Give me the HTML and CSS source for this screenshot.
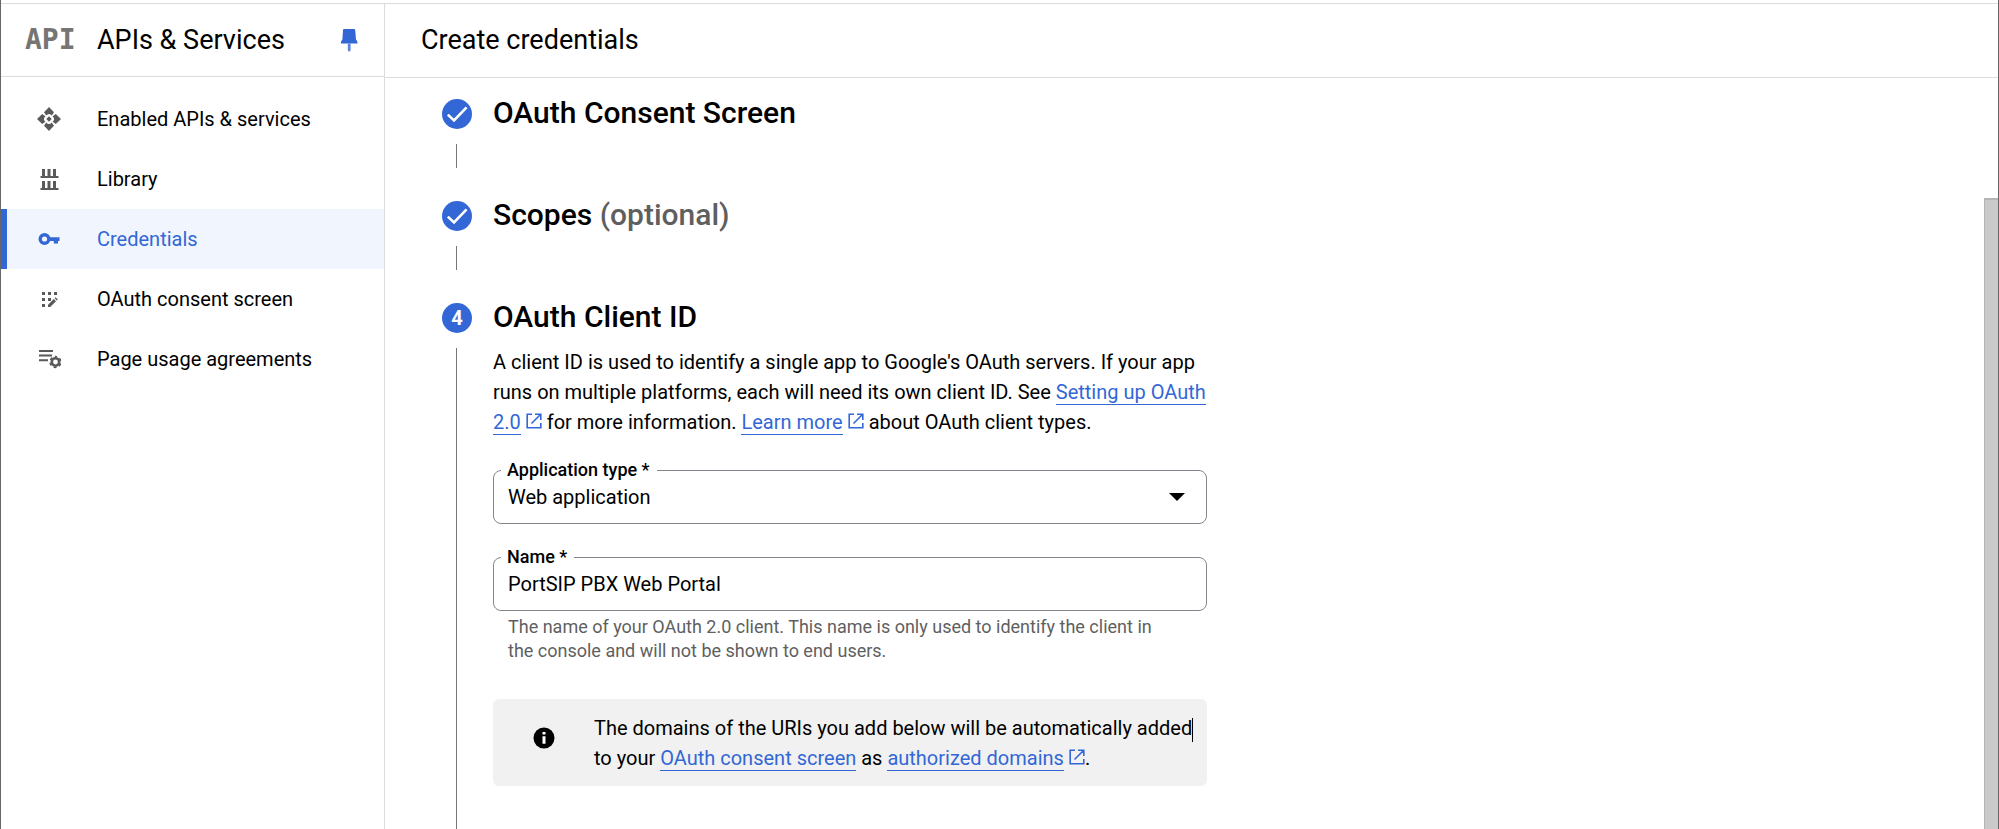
FILE: index.html
```html
<!DOCTYPE html>
<html lang="en">
<head>
<meta charset="utf-8">
<title>Create credentials – APIs &amp; Services</title>
<link rel="stylesheet" href="styles.css">
</head>
<body>
<svg class="defs" aria-hidden="true">
  <symbol id="open" viewBox="0 0 16 16"><path d="M6 1.2H1.2v13.6h13.6V10M9 1.2h5.8V7M14.2 1.8L5.5 10.5" fill="none" stroke="currentColor" stroke-width="1.6"/></symbol>
  <symbol id="check" viewBox="0 0 30 30"><circle cx="15" cy="15" r="15" fill="#3367d6"/><path d="M5.8 15.6L12 21.4L24.6 8.4" fill="none" stroke="#fff" stroke-width="2.6"/></symbol>
</svg>
<div class="shell">
  <aside class="sidebar">
    <div class="product">
      <span class="logo">API</span>
      <h2 class="product-name">APIs &amp; Services</h2>
      <button class="pin" aria-label="Unpin menu">
        <svg width="18" height="24" viewBox="0 0 18 24"><path d="M4 1h10q1.200 0 1.200 1.200l.8 9.300q1.600 1.500 1.600 4H.8q0-2.500 1.600-4L3 2.200Q3 1 4 1z" fill="#3367d6"/><path d="M7.800 15.500h2.800V22l-.8 1.500h-1.200L7.800 22z" fill="#5c85de"/></svg>
      </button>
    </div>
    <nav class="nav">
      <a class="item" href="#apis"><svg class="icon" viewBox="0 0 24 24"><g fill="currentColor"><path d="M12 0L17 5.200L14.800 8.400Q12 5.400 9.200 8.400L7 5.200z"/><path d="M12 24L17 18.800L14.800 15.600Q12 18.600 9.200 15.600L7 18.800z"/><path d="M0 12L5.200 17L8.400 14.800Q5.400 12 8.400 9.200L5.200 7z"/><path d="M24 12L18.800 17L15.600 14.800Q18.600 12 15.600 9.200L18.800 7z"/><path d="M12 9.300L14.700 12L12 14.700L9.300 12z"/></g></svg>Enabled APIs &amp; services</a>
      <a class="item" href="#library"><svg class="icon" viewBox="0 0 24 24"><path d="M5 2h3v7h2.500V2h3v7H16V2h3v7h2.500v2h-18V9H5zM5 14h3v7h2.500v-7h3v7H16v-7h3v7h2.500v2h-18v-2H5z" fill="currentColor"/></svg>Library</a>
      <a class="item active" href="#credentials" aria-current="page"><svg class="icon" viewBox="0 0 24 24"><circle cx="7.500" cy="12" r="4.300" fill="none" stroke="currentColor" stroke-width="3.400"/><path d="M12 10.200h10.500v3.800h-1.500v2.600h-4.200V14H12z" fill="currentColor"/></svg>Credentials</a>
      <a class="item" href="#consent"><svg class="icon" viewBox="0 0 24 24"><path d="M5 5h3v3H5zM11 5h3v3h-3zM17 5h3v3h-3zM5 11h3v3H5zM11 11h3v3h-3zM5 17h3v3H5zM11 17.800l5.800-5.800 2.200 2.200-5.800 5.800H11zM17.600 11.200l1-1 2.200 2.200-1 1z" fill="currentColor"/></svg>OAuth consent screen</a>
      <a class="item" href="#agreements"><svg class="icon" viewBox="0 0 24 24"><path d="M2 3h14v2H2zM2 7.600h13v2H2zM2 12.200h9v2H2z" fill="currentColor"/><circle cx="18.500" cy="15" r="3.700" fill="none" stroke="currentColor" stroke-width="2.600"/><circle cx="18.500" cy="15" r="5.400" fill="none" stroke="currentColor" stroke-width="1.600" stroke-dasharray="3 2.655" stroke-dashoffset="1.500" transform="rotate(-90 18.500 15)"/></svg>Page usage agreements</a>
    </nav>
  </aside>
  <main class="main">
    <header class="page-head"><h1 class="page-title">Create credentials</h1></header>
    <div class="body">
      <div class="steps">
        <section class="step">
          <div class="rail"><svg class="badge" role="img" aria-label="Done"><use href="#check"/></svg><span class="line"></span></div>
          <h2 class="step-title">OAuth Consent Screen</h2>
        </section>
        <section class="step">
          <div class="rail"><svg class="badge" role="img" aria-label="Done"><use href="#check"/></svg><span class="line"></span></div>
          <h2 class="step-title">Scopes <span class="optional">(optional)</span></h2>
        </section>
        <section class="step current">
          <div class="rail"><span class="badge number">4</span><span class="line"></span></div>
          <div class="content">
            <h2 class="step-title">OAuth Client ID</h2>
            <p class="intro">A client ID is used to identify a single app to Google's OAuth servers. If your app runs on multiple platforms, each will need its own client ID. See <a class="link" href="#setup">Setting up OAuth 2.0</a><svg class="open"><use href="#open"/></svg> for more information. <a class="link" href="#more">Learn more</a><svg class="open"><use href="#open"/></svg> about OAuth client types.</p>
            <fieldset class="field">
              <legend class="legend"><label for="type">Application type *</label></legend>
              <select class="control" id="type"><option>Web application</option></select>
              <svg class="arrow" viewBox="0 0 16 8"><path d="M0 0h16L8 8z"/></svg>
            </fieldset>
            <fieldset class="field">
              <legend class="legend"><label for="name">Name *</label></legend>
              <input class="control" id="name" type="text" value="PortSIP PBX Web Portal">
            </fieldset>
            <p class="hint">The name of your OAuth 2.0 client. This name is only used to identify the client in the console and will not be shown to end users.</p>
            <div class="notice">
              <svg class="info" viewBox="0 0 22 22"><circle cx="11" cy="11" r="10.500"/><path d="M9.500 5h3v2.600h-3zM9.500 9.200h3v7.600h-3z" fill="#fff"/></svg>
              <p class="notice-text">The domains of the URIs you add below will be automatically added<span class="caret"></span> to your <a class="link" href="#consent">OAuth consent screen</a> as <a class="link" href="#domains">authorized domains</a><svg class="open"><use href="#open"/></svg>.</p>
            </div>
          </div>
        </section>
      </div>
      <div class="track"><div class="thumb"></div></div>
    </div>
  </main>
</div>
</body>
</html>
```
FILE: styles.css
```css
* { box-sizing: border-box; }
body {
  margin: 0;
  font: 20px/30px Roboto, "Liberation Sans", sans-serif;
  color: #000;
  background: #fff;
}
h1, h2, p { margin: 0; font-weight: 400; }
.defs { display: none; }

.shell {
  display: flex;
  height: 100vh;
  padding-top: 3px;
  overflow: hidden;
  border: solid #66676a;
  border-width: 0 1px;
}
.sidebar {
  flex: none;
  width: 384px;
  border-top: 1px solid #dadce0;
  border-right: 1px solid #dadce0;
}
.product {
  display: flex;
  align-items: center;
  height: 73px;
  padding: 0 26px 0 24px;
  border-bottom: 1px solid #dadce0;
}
.logo {
  width: 72px;
  font: bold 28px/30px "DejaVu Sans Mono", monospace;
  color: #757575;
}
.product-name { flex: 1; font-size: 27px; }
.pin { display: flex; padding: 0; border: 0; background: none; }

.nav { padding-top: 12px; }
.item {
  display: flex;
  align-items: center;
  gap: 36px;
  height: 60px;
  padding-left: 36px;
  color: #000;
  text-decoration: none;
}
.icon { width: 24px; height: 24px; color: #5a5a5a; }
.item.active {
  padding-left: 30px;
  border-left: 6px solid #3367d6;
  background: #f0f5fe;
  color: #3367d6;
}
.active .icon { color: #3367d6; }

.main { flex: 1; display: flex; flex-direction: column; border-top: 1px solid #dadce0; }
.page-head {
  display: flex;
  flex: none;
  align-items: center;
  height: 74px;
  padding: 0 36px 2px;
  border-bottom: 1px solid #dadce0;
}
.page-title { font-size: 27px; }
.body { flex: 1; display: flex; min-height: 0; overflow: hidden; }
.steps {
  flex: 1;
  display: flex;
  flex-direction: column;
  padding: 21px 0 0 57px;
}
.step { display: flex; gap: 21px; padding-bottom: 33px; }
.step.current { flex: 1; padding-bottom: 0; }
.rail { display: flex; flex-direction: column; gap: 15px; width: 30px; }
.badge { flex: none; width: 30px; height: 30px; }
.number {
  border-radius: 50%;
  background: #3367d6;
  color: #fff;
  font-size: 20px;
  font-weight: 700;
  text-align: center;
}
.line { flex: 1; width: 1px; min-height: 24px; margin-left: 14px; background: #757575; }
.step-title { font-size: 30px; line-height: 28px; font-weight: 500; }
.optional { color: #5f5f5f; }
.content { flex: 1; max-width: 714px; }
.intro { margin: 16px 0 21px; }
.link { color: #3367d6; text-decoration: none; border-bottom: 1px solid #3367d6; }
.open { width: 16px; height: 16px; margin-left: 5px; color: #3367d6; }

.field {
  position: relative;
  margin: 0 0 21px;
  padding: 0;
  border: 1px solid #80868b;
  border-radius: 8px;
}
.legend {
  height: 24px;
  margin-left: 7px;
  padding: 0 7px 0 6px;
  font-size: 18px;
  font-weight: 500;
  line-height: 24px;
}
.control {
  display: block;
  width: 100%;
  height: 41px;
  padding: 0 14px 11px;
  border: 0;
  outline: 0;
  background: none;
  color: #000;
  font: inherit;
  appearance: none;
}
.arrow { position: absolute; top: 11px; right: 21px; width: 16px; height: 8px; pointer-events: none; }
.hint { margin: -17px 40px 36px 15px; font-size: 18px; line-height: 24px; color: #5f5f5f; }
.notice {
  display: flex;
  align-items: flex-start;
  padding: 14px 8px 13px 40px;
  border-radius: 6px;
  background: #f1f1f1;
}
.info { flex: none; width: 22px; height: 22px; margin: 14px 39px 0 0; }
.caret { display: inline-block; width: 1px; height: 24px; margin-right: -1px; vertical-align: middle; background: #000; }

.track { flex: none; width: 14px; padding-top: 120px; }
.thumb { height: 100%; border: solid #b5b5b5; border-width: 2px 0 0 1px; background: #cacaca; }
```
